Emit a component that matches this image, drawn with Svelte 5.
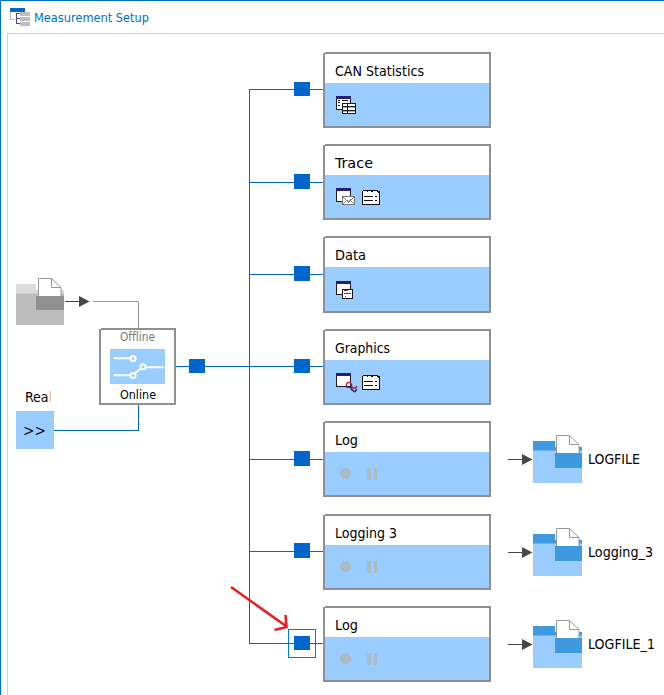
<script>
  const cards = [
    { title: 'CAN Statistics', w: 89, y: 52, wire: 89, sq: 82, sh: 14, icons: 'stats' },
    { title: 'Trace', w: 38, y: 144, wire: 182, sq: 174, sh: 15, icons: 'trace' },
    { title: 'Data', w: 31, y: 236, h: 77, wire: 274, sq: 266, sh: 15, icons: 'data' },
    { title: 'Graphics', w: 55, y: 329, wire: 366, sq: 359, sh: 14, icons: 'graphics' },
    { title: 'Log', w: 23, y: 421, wire: 459, sq: 451, sh: 15, icons: 'log' },
    { title: 'Logging 3', w: 62, y: 514, wire: 551, sq: 543, sh: 15, icons: 'log' },
    { title: 'Log', w: 23, y: 606, wire: 643, sq: 636, sh: 14, icons: 'log' }
  ];
  const files = [
    { name: 'LOGFILE', w: 52, y: 435 },
    { name: 'Logging_3', w: 65, y: 528 },
    { name: 'LOGFILE_1', w: 67, y: 620 }
  ];
</script>

{#snippet win()}
  <path fill="#1c1c1c" d="M0 0h15v14H0z" /><path fill="#fff" d="M1 3h13v10H1z" /><path fill="#2b1e72" d="M0 0h15v3H0z" />
{/snippet}

{#snippet list()}
  <path fill="#111" d="M26 3h1v-1h15v1h2v14H26z" />
  <path fill="#fff" d="M27 3h4v1h11v1h1v11H27z" />
  <path fill="#111" d="M31 3h11v1H31z" />
  <path fill="#fff7b0" d="M32 3h3v1h-3zM37 3h4v1h-4z" />
  <path stroke="#111" d="M28 8.500h9M39 8.500h2M28 12.500h9M39 12.500h2" />
{/snippet}

{#snippet folder(light, mid, dark, width, height, split, pocket)}
  <path fill={mid} d="M0 6h{split}v6h{width - split}v4H0z" />
  <path fill={light} d="M0 15.500h{width}V{height}H0z" />
  <path fill="#fff" stroke="#999" d="M{width - 25.5} 19V.5h13l9.500 9v9.500z" />
  <path fill="none" stroke="#999" d="M{width - 12.500} .5v9h9" />
  <path fill={dark} d="M{split} 18h{width - split}v{pocket}H{split}z" />
{/snippet}

<main>
  <header>
    <svg width="22" height="20" shape-rendering="crispEdges">
      <path fill="#0066cc" d="M0 0h15v4H0z" />
      <path fill="none" stroke="#bdbdbd" d="M.5 4v7.500h4" />
      <path fill="none" stroke="#51478a" d="M10 5.500H6.500v10H10M6.500 10.500H10" />
      <path fill="#bdbdbd" d="M10 4h10v4H10zM10 9h10v4H10zM10 14h10v4H10z" />
    </svg>
    <svg width="130" height="22">
      <text x="0" y="14" font-size="13" fill="#0072c6" textLength="115" lengthAdjust="spacingAndGlyphs">Measurement Setup</text>
    </svg>
  </header>
  <section class="panel"></section>

  <div class="canvas">
    <svg class="wires" width="664" height="695">
      <g fill="none" stroke="#0066cc" shape-rendering="crispEdges">
        <path d="M249.500 89V644M176 366.500H323M54 430.500H138.500V405" />
        {#each cards as c}<path d="M249 {c.wire + 0.5}H323" />{/each}
        <rect x="288.500" y="629.500" width="27" height="28" stroke="#0078d7" />
      </g>
      <g fill="#0066cc">
        <path d="M189 359h16v14h-16z" />
        {#each cards as c}<rect x="294" y={c.sq} width="16" height={c.sh} />{/each}
      </g>

      <path d="M93 301.500H138.500V328" fill="none" stroke="#999" />
      <g transform="translate(16 278)">{@render folder('#bdbdbd', '#dcdcdc', '#909090', 48, 47, 20, 14)}</g>
      <path d="M65 301.500h14" stroke="#484848" /><path d="M79 296l10.500 5.500L79 307z" fill="#484848" />

      <text x="25" y="402" font-size="14">Rea<tspan fill="#ffb56b">l</tspan></text>
      <path d="M16 411h38v38H16z" fill="#99ccff" />
      <text x="23" y="436" font-size="15.500" fill="#111" textLength="23" lengthAdjust="spacingAndGlyphs">&gt;&gt;</text>

      {#each files as f}
        <path d="M508 {f.y + 24.500}h14" stroke="#484848" />
        <path d="M522 {f.y + 19}l10.500 5.500-10.500 5.500z" fill="#484848" />
        <g transform="translate(533 {f.y})">
          {@render folder('#99ccff', '#3e99df', '#3e99df', 49, 48, 22, 15)}
        </g>
        <text x="588" y={f.y + 29} font-size="13.500" textLength={f.w} lengthAdjust="spacingAndGlyphs">{f.name}</text>
      {/each}
    </svg>

    <div class="switch">
      <svg width="73" height="73">
        <text x="19" y="11" font-size="12" fill="#777" textLength="35" lengthAdjust="spacingAndGlyphs">Offline</text>
        <path d="M9 19h55v35H9z" fill="#99ccff" />
        <g fill="none" stroke="#fff" stroke-width="2">
          <path d="M12.500 28.200H29M12.500 45.200H29M45 37.200H62.500M34 43l6-4.500" />
          <circle cx="32" cy="28.500" r="2.500" /><circle cx="32" cy="45.500" r="2.500" /><circle cx="42" cy="36.700" r="2.500" />
        </g>
        <text x="19" y="69" font-size="12.500" textLength="36" lengthAdjust="spacingAndGlyphs">Online</text>
      </svg>
    </div>

    {#each cards as c}
      <article style="top:{c.y}px;height:{c.h ?? 76}px">
        <div class="title">
          <svg width="150" height="29"><text x="10" y="22" font-size="14.500" textLength={c.w} lengthAdjust="spacingAndGlyphs">{c.title}</text></svg>
        </div>
        <div class="body" class:low={c.icons === 'data'}>
          <svg width="48" height="20" shape-rendering="crispEdges">
            {#if c.icons === 'log'}
              <g fill="#a9bbc4">
                <path d="M7 3h5v1h1v1h1v1h1v5h-1v1h-1v1h-1v1H7v-1H6v-1H5v-1H4V6h1V5h1V4h1z" />
                <path d="M31 3h4v12h-4zM38 3h3v12h-3z" />
              </g>
            {:else}
              {@render win()}
            {/if}
            {#if c.icons === 'stats'}
              <path stroke="#111" d="M2 4.500h2M6 4.500h6M2 6.500h2M2 9.500h2" />
              <path fill="#1c1818" d="M6 7h14v11H6z" />
              <path fill="#fff" d="M7 8h4v2H7zM12 8h7v2h-7zM7 11h4v3H7zM12 11h7v3h-7zM7 15h4v2H7zM12 15h7v2h-7z" />
              <path stroke="#b5aca4" d="M7 11.500h4M12 11.500h7M7 15.500h4M12 15.500h7" />
            {:else if c.icons === 'trace'}
              <path fill="#fff" stroke="#777" d="M6.500 8.500h12v8h-12z" />
              <path fill="none" stroke="#888" d="M7 9l5.500 5L18 9M7 16l3-3M18 16l-3-3" />
              {@render list()}
            {:else if c.icons === 'data'}
              <path fill="#fff" stroke="#1c1818" d="M6.500 8.500h10v9h-10z" />
              <path stroke="#b8203c" d="M8 9.500h4M8 12.500h7M9 15.500h1" />
            {:else if c.icons === 'graphics'}
              <g fill="none" shape-rendering="auto" stroke-width="1.400">
                <path stroke="#2b1e72" d="M10 14h3.500l3 1.500M15.500 14.500v2l1 .5 1.500 1.500h1l2-2.500" />
                <path stroke="#b8203c" d="M10.500 13.500V11l1.500-1.500h2l1.500 1.500v2.500l2 1.500h2l1.500-2" />
              </g>
              {@render list()}
            {/if}
          </svg>
        </div>
      </article>
    {/each}

    <svg class="pointer" width="70" height="55">
      <path d="M6 6L61 45M60.500 34l1 12-12 3" fill="none" stroke="#ed1c24" stroke-width="2.600" />
    </svg>
  </div>
</main>

<style>
  :global(body) { margin: 0; background: #fff; }
  main {
    position: relative;
    box-sizing: border-box;
    width: 664px;
    height: 695px;
    overflow: hidden;
    display: flex;
    flex-direction: column;
    border-left: 1px solid #0072c6;
    border-top: 1px solid #0072c6;
    background: #fcfdfe;
    font-family: "DejaVu Sans Condensed", "DejaVu Sans", sans-serif;
    font-stretch: condensed;
    font-variant-ligatures: none;
  }
  header { display: flex; gap: 2px; height: 25px; padding: 7px 0 0 9px; background: #fff; }
  .panel { flex: 1; margin-left: 6px; border-left: 1px solid #d3d3d3; border-top: 1px solid #d3d3d3; background: #fff; }
  svg { display: block; overflow: visible; }
  .canvas { position: absolute; left: -1px; top: -1px; width: 664px; height: 695px; }
  .wires { position: absolute; left: 0; top: 0; }
  .switch { position: absolute; left: 99px; top: 328px; border: 2px solid #909090; background: #fff; }
  article {
    position: absolute;
    left: 323px;
    width: 168px;
    box-sizing: border-box;
    display: flex;
    flex-direction: column;
    border: 2px solid #909090;
    background: #fff;
  }
  article::before, .switch::before { content: ''; position: absolute; left: -2px; top: -2px; width: 2px; height: 1px; background: #fff; }
  .title { height: 29px; }
  .body { flex: 1; padding: 13px 0 0 11px; background: #99ccff; }
  .body.low { padding-top: 14px; }
  .pointer { position: absolute; left: 225px; top: 581px; }
</style>
